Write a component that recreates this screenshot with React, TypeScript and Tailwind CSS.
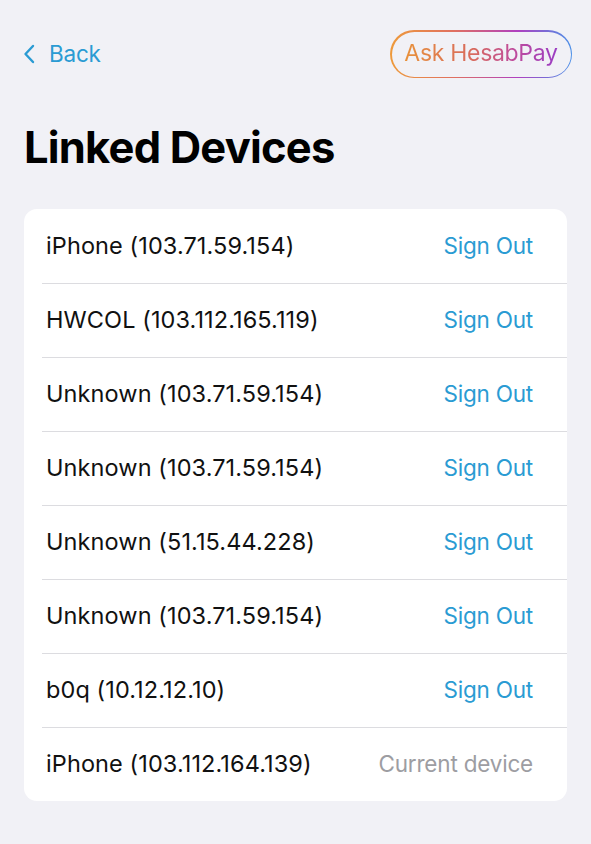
import React from "react";

const rows: { name: string; action: "signout" | "current" }[] = [
  { name: "iPhone (103.71.59.154)", action: "signout" },
  { name: "HWCOL (103.112.165.119)", action: "signout" },
  { name: "Unknown (103.71.59.154)", action: "signout" },
  { name: "Unknown (103.71.59.154)", action: "signout" },
  { name: "Unknown (51.15.44.228)", action: "signout" },
  { name: "Unknown (103.71.59.154)", action: "signout" },
  { name: "b0q (10.12.12.10)", action: "signout" },
  { name: "iPhone (103.112.164.139)", action: "current" },
];

export default function App() {
  return (
    <div
      className="w-[591px] h-[844px] bg-[#f1f1f6] text-[#111]"
      style={{ fontFamily: "Inter, 'Noto Sans', sans-serif" }}
    >
      <div className="flex items-center justify-between pl-[23px] pr-[19px] pt-[30px]">
        <div className="flex items-center gap-[14px] text-[#2a9bd3]">
          <svg width="12" height="20" viewBox="0 0 12 20" fill="none">
            <path d="M10 2 L2.5 10 L10 18" stroke="#2a9bd3" strokeWidth="2.4" strokeLinecap="round" strokeLinejoin="round" />
          </svg>
          <span className="text-[22.5px] leading-none tracking-[-0.2px]">Back</span>
        </div>
        <div className="rounded-full p-[1.5px] bg-[linear-gradient(90deg,#ee9a3a_0%,#e07060_35%,#b040c0_70%,#4a90e8_100%)]">
          <div className="h-[45px] w-[179px] rounded-full bg-[#f1f1f6] flex items-center justify-center">
            <span className="text-[23px] leading-none tracking-[-0.3px] bg-[linear-gradient(90deg,#e8913a_0%,#d86a5e_45%,#c04c9a_70%,#9a3cc4_100%)] bg-clip-text text-transparent pb-[2px]">
              Ask HesabPay
            </span>
          </div>
        </div>
      </div>

      <h1 className="mt-[48px] pl-[24px] text-[43.5px] font-bold leading-none tracking-[-0.8px] text-black">
        Linked Devices
      </h1>

      <div className="mx-[24px] mt-[39px] bg-white rounded-[13px] overflow-hidden">
        {rows.map((r, i) => (
          <div key={i} className="flex flex-col">
            {i > 0 && <div className="ml-[18px] h-px bg-[#dcdce0]" />}
            <div className={`flex items-center justify-between pl-[22px] pr-[34px] ${i > 0 ? "h-[73px]" : "h-[74px]"}`}>
              <span className="text-[23.5px] tracking-[0.1px] text-[#111]">{r.name}</span>
              {r.action === "signout" ? (
                <span className="text-[22.5px] tracking-[-0.2px] text-[#2a9bd3]">Sign Out</span>
              ) : (
                <span className="text-[22.5px] tracking-[-0.2px] text-[#9d9da2]">Current device</span>
              )}
            </div>
          </div>
        ))}
      </div>
    </div>
  );
}
